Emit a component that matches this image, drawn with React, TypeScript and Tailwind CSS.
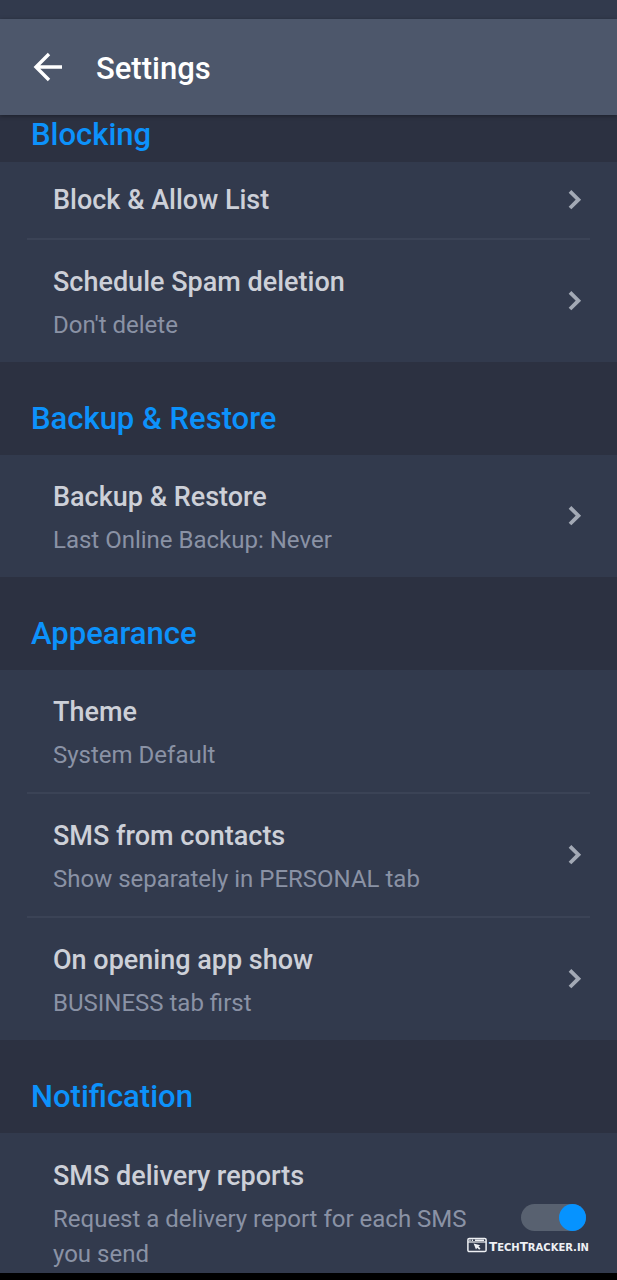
import { useState } from "react";

type Row = { title: string; detail?: string; chevron?: boolean };

const blocking: Row[] = [
  { title: "Block & Allow List", chevron: true },
  { title: "Schedule Spam deletion", detail: "Don't delete", chevron: true },
];
const backup: Row[] = [
  { title: "Backup & Restore", detail: "Last Online Backup: Never", chevron: true },
];
const appearance: Row[] = [
  { title: "Theme", detail: "System Default" },
  { title: "SMS from contacts", detail: "Show separately in PERSONAL tab", chevron: true },
  { title: "On opening app show", detail: "BUSINESS tab first", chevron: true },
];

function Chevron() {
  return (
    <svg className="h-5 w-3.5 shrink-0" viewBox="0 0 14 20" fill="none" stroke="#a3a9b5" strokeWidth="3.8" aria-hidden="true">
      <path d="M2 1.4 10.4 9.7 2 18" />
    </svg>
  );
}

function Heading({ children, first }: { children: string; first?: boolean }) {
  return (
    <h2
      className={`px-[31px] text-[31px] leading-9 font-medium text-[#0c92fb] ${first ? "pt-0.5 pb-[9px]" : "pt-[39px] pb-[18px]"}`}
    >
      {children}
    </h2>
  );
}

function RowList({ rows }: { rows: Row[] }) {
  return (
    <ul className="bg-[#323a4d]">
      {rows.map((row, i) => (
        <li key={row.title}>
          {i > 0 && <div className="mx-[27px] h-0.5 bg-[#3b4356]" />}
          <button
            type="button"
            className="flex w-full items-center justify-between pr-[35px] pl-[53px] text-left"
          >
            <span className={`flex flex-col gap-2 ${row.detail ? "pt-6 pb-[19px]" : "py-5"}`}>
              <span className="text-[27px] leading-9 font-medium text-[#cdd0d8]">{row.title}</span>
              {row.detail && <span className="text-2xl leading-[35px] text-[#8a92a5]">{row.detail}</span>}
            </span>
            {row.chevron && <Chevron />}
          </button>
        </li>
      ))}
    </ul>
  );
}

export default function App() {
  const [reports, setReports] = useState(true);

  return (
    <div className="relative flex h-screen flex-col bg-[#2c3141] font-['Roboto',sans-serif]">
      <div className="h-[19px] shrink-0 bg-[#323a4d]" />
      <header className="z-10 flex h-24 shrink-0 items-center gap-8 bg-[#4d576b] px-8 shadow-[0_1px_4px_rgba(0,0,0,0.35)]">
        <button type="button" aria-label="Back" className="h-8 w-8">
          <svg className="h-8 w-8" viewBox="0 0 32 32" fill="none" stroke="#fff" strokeWidth="3.4" aria-hidden="true">
            <path d="M30 16H4.5M17 3 4 16l13 13" />
          </svg>
        </button>
        <h1 className="pt-1 text-[31px] leading-9 font-medium text-white">Settings</h1>
      </header>

      <main className="flex-1 overflow-y-auto [scrollbar-width:none]">
        <Heading first>Blocking</Heading>
        <RowList rows={blocking} />
        <Heading>Backup &amp; Restore</Heading>
        <RowList rows={backup} />
        <Heading>Appearance</Heading>
        <RowList rows={appearance} />
        <Heading>Notification</Heading>
        <label className="flex items-center justify-between gap-8 bg-[#323a4d] pr-[31px] pl-[53px]">
          <span className="flex flex-col gap-2 pt-[25px] pb-[30px]">
            <span className="text-[27px] leading-9 font-medium text-[#cdd0d8]">SMS delivery reports</span>
            <span className="text-2xl leading-[35px] text-[#8a92a5]">
              Request a delivery report for each SMS you send
            </span>
          </span>
          <input
            type="checkbox"
            role="switch"
            checked={reports}
            onChange={(e) => setReports(e.target.checked)}
            className="flex h-[27px] w-[65px] shrink-0 appearance-none rounded-full bg-[#586170] before:h-[27px] before:w-[27px] before:rounded-full before:bg-[#8a92a5] checked:justify-end checked:before:bg-[#0693ff]"
          />
        </label>
      </main>

      <div className="h-[7px] shrink-0 bg-black" />

      <div className="absolute right-7 bottom-6 flex items-start gap-0.5 text-[#eef0f4]">
        <svg className="h-4 w-5" viewBox="0 0 20 16" fill="none" stroke="currentColor" aria-hidden="true">
          <rect x="0.9" y="1.4" width="18.2" height="13.2" rx="1.4" strokeWidth="1.5" />
          <path d="M1 5h18" strokeWidth="1.2" />
          <path d="M2.4 3.2h1.2M4.8 3.2H6M8 3.2h9" strokeWidth="1.6" />
          <path d="M6.6 6.6l6.6 1.6-1.7 1.2 2 2-1.3 1.3-2-2L9 12.500z" fill="currentColor" stroke="none" />
        </svg>
        <span className="pt-0.5 font-['DejaVu_Sans',sans-serif] text-[10px] leading-4 font-bold uppercase">
          <span className="text-xs leading-4">T</span>ech<span className="text-xs leading-4">T</span>racker.in
        </span>
      </div>
    </div>
  );
}
